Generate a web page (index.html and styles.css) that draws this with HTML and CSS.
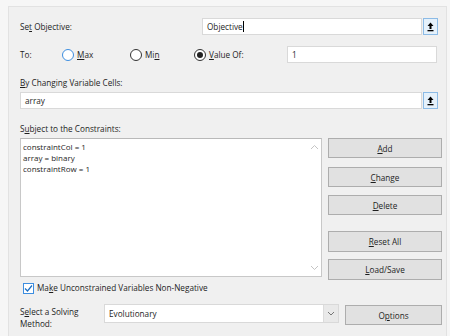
FILE: index.html
```html
<!DOCTYPE html>
<html lang="en">
<head>
    <meta charset="UTF-8">
    <title>Solver Parameters</title>
    <link rel="stylesheet" href="styles.css">
</head>
<body>
    <div class="solver-frame">
        <div class="row row-objective">
            <label class="lbl lbl-objective">Se<u>t</u> Objective:</label>
            <div class="field field-objective">Objective<span class="caret"></span></div>
            <button class="ref-btn" type="button">
                <svg width="7" height="10" viewBox="0 0 7 10"><path d="M3.5 0.5 L6.5 4 L4.5 4 L4.5 7 L2.5 7 L2.5 4 L0.5 4 Z" fill="#000"/><rect x="0.5" y="8" width="6" height="1.3" fill="#000"/></svg>
            </button>
        </div>

        <div class="row row-to">
            <span class="lbl lbl-to">To:</span>
            <label class="radio radio-max"><span class="dot focus"></span><u>M</u>ax</label>
            <label class="radio radio-min"><span class="dot"></span>Mi<u>n</u></label>
            <label class="radio radio-value"><span class="dot checked"></span><u>V</u>alue Of:</label>
            <div class="field field-value">1</div>
        </div>

        <div class="caption"><u>B</u>y Changing Variable Cells:</div>
        <div class="row row-cells">
            <div class="field field-cells">array</div>
            <button class="ref-btn" type="button">
                <svg width="7" height="10" viewBox="0 0 7 10"><path d="M3.5 0.5 L6.5 4 L4.5 4 L4.5 7 L2.5 7 L2.5 4 L0.5 4 Z" fill="#000"/><rect x="0.5" y="8" width="6" height="1.3" fill="#000"/></svg>
            </button>
        </div>

        <div class="caption">S<u>u</u>bject to the Constraints:</div>
        <div class="row row-constraints">
            <div class="constraint-list">
                <div class="items">
                    <div>constraintCol = 1</div>
                    <div>array = binary</div>
                    <div>constraintRow = 1</div>
                </div>
                <div class="scroll">
                    <svg width="9" height="6" viewBox="0 0 9 6"><path d="M1 5 L4.5 1.5 L8 5" fill="none" stroke="#c4c4c4" stroke-width="1"/></svg>
                    <svg width="9" height="6" viewBox="0 0 9 6"><path d="M1 1 L4.5 4.5 L8 1" fill="none" stroke="#c4c4c4" stroke-width="1"/></svg>
                </div>
            </div>
            <div class="side-buttons">
                <button class="btn btn-add" type="button"><u>A</u>dd</button>
                <button class="btn btn-change" type="button"><u>C</u>hange</button>
                <button class="btn btn-delete" type="button"><u>D</u>elete</button>
                <button class="btn btn-reset" type="button"><u>R</u>eset All</button>
                <button class="btn btn-load" type="button"><u>L</u>oad/Save</button>
            </div>
        </div>

        <label class="check-row">
            <span class="checkbox">
                <svg width="9" height="9" viewBox="0 0 9 9"><path d="M1 4.5 L3.5 7 L8 1.5" fill="none" stroke="#1b6fc4" stroke-width="1.2"/></svg>
            </span>
            Ma<u>k</u>e Unconstrained Variables Non-Negative
        </label>

        <div class="row row-method">
            <span class="lbl lbl-method">S<u>e</u>lect a Solving<br>Method:</span>
            <div class="select">
                <span class="select-text">Evolutionary</span>
                <span class="select-arrow">
                    <svg width="8" height="5" viewBox="0 0 8 5"><path d="M1 1 L4 4 L7 1" fill="none" stroke="#777" stroke-width="1"/></svg>
                </span>
            </div>
            <button class="btn btn-options" type="button">O<u>p</u>tions</button>
        </div>
    </div>
</body>
</html>
```

FILE: styles.css
```css
body {
    margin: 0;
    background-color: #f6f6f6;
    font-family: "Open Sans", "Noto Sans", sans-serif;
    font-size: 8.2px;
    color: #1e1e1e;
    height: 336px;
    overflow: hidden;
}

.solver-frame {
    margin: 6px 3px 0 8px;
    height: 340px;
    background-color: #f0f0f0;
    border: 1px solid #e2e2e2;
    border-bottom: none;
    padding: 11px 3px 0 11px;
    box-sizing: border-box;
}

u {
    text-decoration-thickness: 1px;
    text-underline-offset: 1px;
}

.row {
    display: flex;
    align-items: center;
}

.lbl {
    line-height: 12px;
}

.field {
    height: 17px;
    box-sizing: border-box;
    background: white;
    border: 1px solid #d9d9d9;
    padding: 0 4px;
    line-height: 15px;
    white-space: nowrap;
}

.lbl-objective {
    width: 182px;
}

.field-objective {
    width: 220px;
}

.caret {
    display: inline-block;
    width: 1px;
    height: 11px;
    background: #000;
    vertical-align: -2px;
}

.ref-btn {
    width: 15px;
    height: 17px;
    margin-left: 1px;
    padding: 0;
    border: 1px solid #8cbbe6;
    background: #e5f1fb;
    display: flex;
    align-items: center;
    justify-content: center;
}

/* To: row */
.row-to {
    margin-top: 11px;
}

.lbl-to {
    width: 42px;
}

.radio {
    display: flex;
    align-items: center;
    line-height: 12px;
}

.radio-max {
    width: 68px;
}

.radio-min {
    width: 64px;
}

.radio-value {
    width: 93px;
}

.dot {
    width: 12px;
    height: 12px;
    box-sizing: border-box;
    border: 1px solid #333;
    border-radius: 50%;
    background: white;
    margin-right: 3px;
    position: relative;
}

.dot.focus {
    border-color: #3d8ee0;
}

.dot.checked::after {
    content: "";
    position: absolute;
    left: 2px;
    top: 2px;
    width: 6px;
    height: 6px;
    border-radius: 50%;
    background: #222;
}

.field-value {
    width: 150px;
}

.caption {
    margin-top: 14px;
    line-height: 12px;
}

.row-cells {
    margin-top: 3px;
}

.field-cells {
    width: 402px;
}

/* constraints */
.row-constraints {
    margin-top: 3px;
    align-items: flex-start;
}

.constraint-list {
    width: 302px;
    height: 139px;
    box-sizing: border-box;
    background: white;
    border: 1px solid #c8c8c8;
    border-top-color: #b9b9b9;
    display: flex;
    font-size: 8px;
}

.items {
    flex: 1;
    padding: 2px 2px;
    line-height: 11px;
}

.scroll {
    width: 14px;
    display: flex;
    flex-direction: column;
    justify-content: space-between;
    align-items: center;
    padding: 5px 0;
}

.side-buttons {
    margin-left: 6px;
    width: 114px;
    display: flex;
    flex-direction: column;
}

.btn {
    font-family: inherit;
    font-size: inherit;
    color: #1e1e1e;
    background: #e1e1e1;
    border: 1px solid #adadad;
    height: 20px;
    padding: 0;
}

.btn-change {
    margin-top: 9px;
}

.btn-delete {
    margin-top: 8px;
}

.btn-reset {
    margin-top: 16px;
    height: 21px;
}

.btn-load {
    margin-top: 7px;
    height: 21px;
}

/* checkbox row */
.check-row {
    display: flex;
    align-items: center;
    margin-top: 2px;
    padding-left: 3px;
    line-height: 12px;
}

.checkbox {
    width: 11px;
    height: 11px;
    box-sizing: border-box;
    border: 1px solid #3d8ee0;
    background: white;
    margin-right: 3px;
    display: flex;
    align-items: center;
    justify-content: center;
}

/* method row */
.row-method {
    margin-top: 10px;
    align-items: flex-start;
}

.lbl-method {
    width: 84px;
    margin-top: 2px;
}

.select {
    width: 235px;
    height: 19px;
    box-sizing: border-box;
    background: white;
    border: 1px solid #d9d9d9;
    display: flex;
}

.select-text {
    flex: 1;
    padding-left: 4px;
    line-height: 17px;
}

.select-arrow {
    width: 14px;
    background: #e9e9e9;
    border-left: 1px solid #dcdcdc;
    display: flex;
    align-items: center;
    justify-content: center;
}

.btn-options {
    width: 97px;
    margin-left: 6px;
    margin-top: 1px;
}
```
